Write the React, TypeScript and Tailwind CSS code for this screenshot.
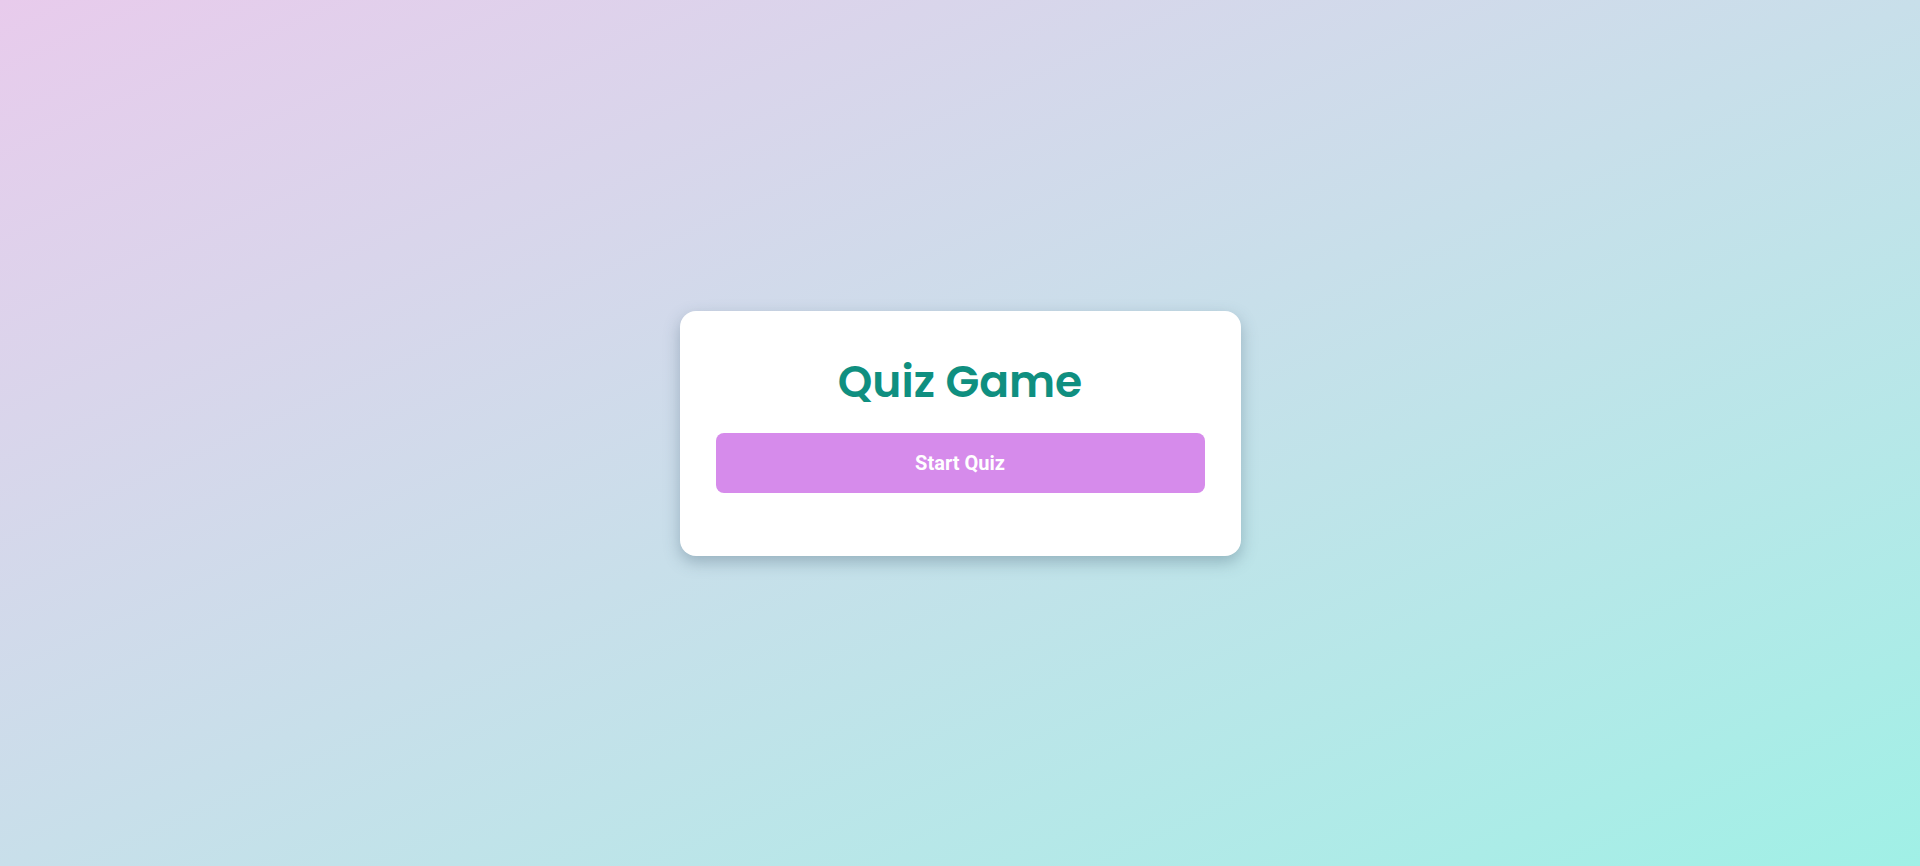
export default function App() {
  return (
    <main className="flex min-h-screen w-full items-center justify-center bg-gradient-to-br from-[#e8cbec] via-[#c8dfea] to-[#a0f0e6]">
      {/* Start card */}
      <div className="flex w-[561px] flex-col items-center rounded-2xl bg-white px-9 pt-[36px] pb-[63px] shadow-[0_6px_16px_rgba(60,90,110,0.35)]">
        <h1 className="mb-[17px] text-[44px] leading-[69px] font-semibold text-[#0f8f80] [font-family:Poppins,Lato,sans-serif]">
          Quiz Game
        </h1>
        <button className="h-[60px] w-full rounded-lg bg-[#d68beb] text-[20px] font-bold text-white [font-family:Roboto,sans-serif]">
          Start Quiz
        </button>
      </div>
    </main>
  );
}
